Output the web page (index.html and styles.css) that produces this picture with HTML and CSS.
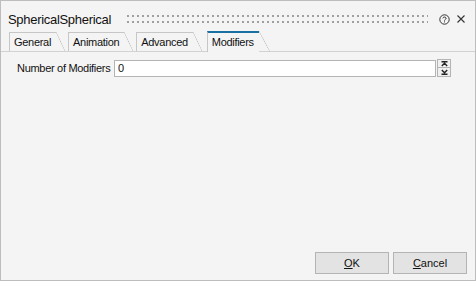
FILE: index.html
```html
<!DOCTYPE html>
<html lang="en">
<head>
<meta charset="utf-8">
<title>SphericalSpherical</title>
<link rel="stylesheet" href="styles.css">
</head>
<body>
<div class="window">
  <div class="titlebar">
    <span class="title">SphericalSpherical</span>
    <div class="grip"><div class="dots"></div><div class="dots"></div></div>
    <svg class="help" width="11" height="11" viewBox="0 0 11 11">
      <circle cx="5.5" cy="5.5" r="4.7" fill="none" stroke="#333" stroke-width="1"/>
      <path d="M3.9 4.3 C3.9 2.6 7.1 2.6 7.1 4.3 C7.1 5.4 5.5 5.4 5.5 6.6" fill="none" stroke="#333" stroke-width="1"/>
      <rect x="5" y="7.4" width="1" height="1" fill="#333"/>
    </svg>
    <svg class="close" width="10" height="10" viewBox="0 0 10 10">
      <path d="M1.5 1.5 L8.5 8.5 M8.5 1.5 L1.5 8.5" stroke="#333" stroke-width="1.1"/>
    </svg>
  </div>
  <div class="tabs">
    <div class="tab">General</div>
    <div class="tab">Animation</div>
    <div class="tab">Advanced</div>
    <div class="tab active">Modifiers</div>
  </div>
  <div class="content">
    <div class="field">
      <label class="label">Number of Modifiers</label>
      <div class="input">0</div>
      <div class="spinner">
        <div class="spin">
          <svg width="7" height="6" viewBox="0 0 7 6"><path d="M0.5 0.8 H6.5 M0.8 5 L3.5 2.3 L6.2 5" fill="none" stroke="#222" stroke-width="1.4"/></svg>
        </div>
        <div class="spin">
          <svg width="7" height="6" viewBox="0 0 7 6"><path d="M0.5 5.2 H6.5 M0.8 1 L3.5 3.7 L6.2 1" fill="none" stroke="#222" stroke-width="1.4"/></svg>
        </div>
      </div>
    </div>
  </div>
  <div class="buttons">
    <button class="btn"><u>O</u>K</button>
    <button class="btn"><u>C</u>ancel</button>
  </div>
</div>
</body>
</html>
```
FILE: styles.css
```css
html, body {
  margin: 0;
  padding: 0;
}
body {
  font-family: "Liberation Sans", Arial, sans-serif;
  font-size: 11px;
  color: #111111;
  background: #f4f4f4;
}
.window {
  box-sizing: border-box;
  width: 476px;
  height: 281px;
  border: 1px solid #bdbdbd;
  background: #f4f4f4;
  display: flex;
  flex-direction: column;
}
.titlebar {
  box-sizing: border-box;
  height: 30px;
  padding: 6px 9px 0 7px;
  display: flex;
  align-items: center;
}
.title {
  font-size: 13px;
  line-height: 15px;
  letter-spacing: -0.3px;
  color: #111111;
}
.grip {
  flex: 1;
  margin: 0 11px 0 16px;
  display: flex;
  flex-direction: column;
  gap: 4px;
}
.dots {
  height: 2px;
  background: repeating-linear-gradient(90deg, #a0a0a0 0 2px, transparent 2px 5px);
}
.help { display: block; }
.close { display: block; margin-left: 6px; }
.tabs {
  height: 20px;
  border-bottom: 1px solid #d2d2d2;
  padding-left: 8px;
  display: flex;
  align-items: flex-end;
}
.tab {
  position: relative;
  box-sizing: border-box;
  height: 19px;
  padding: 3px 5px 2px 4px;
  border-top: 1px solid #c6c6c6;
  border-left: 1px solid #c6c6c6;
  line-height: 13px;
  letter-spacing: -0.3px;
  color: #111111;
}
.tab + .tab { margin-left: 12px; }
.tab::after {
  content: "";
  position: absolute;
  top: -1px;
  right: -9px;
  width: 9px;
  height: 19px;
  background: linear-gradient(to top right, transparent calc(50% - 0.6px), #c6c6c6 50%, transparent calc(50% + 0.6px));
}
.tab + .tab.active { margin-left: 14px; }
.tab.active {
  height: 21px;
  margin-bottom: -1px;
  padding-bottom: 3px;
  border-top: 2px solid #1a6fa3;
  background: #f4f4f4;
}
.tab.active::after {
  top: -2px;
  height: 21px;
  right: -11px;
  width: 11px;
}
.content {
  flex: 1;
  padding: 7px 24px 0 16px;
}
.field {
  display: flex;
  align-items: flex-start;
  height: 18px;
}
.label {
  width: 97px;
  line-height: 13px;
  margin-top: 3px;
  letter-spacing: -0.3px;
  white-space: nowrap;
}
.input {
  flex: 1;
  box-sizing: border-box;
  height: 17px;
  margin-top: 1px;
  border: 1px solid #b4b4b4;
  background: #ffffff;
  padding: 1px 3px;
  line-height: 13px;
}
.spinner {
  width: 14px;
  margin-left: 1px;
  display: flex;
  flex-direction: column;
}
.spin {
  box-sizing: border-box;
  height: 9px;
  border: 1px solid #b4b4b4;
  background: #f0f0f0;
  display: flex;
  align-items: center;
  justify-content: center;
}
.spin + .spin { border-top: none; height: 9px; }
.spin svg { display: block; }
.buttons {
  display: flex;
  justify-content: flex-end;
  gap: 4px;
  padding: 0 8px 6px 0;
}
.btn {
  box-sizing: border-box;
  width: 74px;
  height: 22px;
  border: 1px solid #b4b4b4;
  background: #e3e3e3;
  font-family: "Liberation Sans", Arial, sans-serif;
  font-size: 11px;
  color: #111111;
  padding: 0;
  margin: 0;
}
.btn u { text-decoration-thickness: 1px; text-underline-offset: 1px; }
```
